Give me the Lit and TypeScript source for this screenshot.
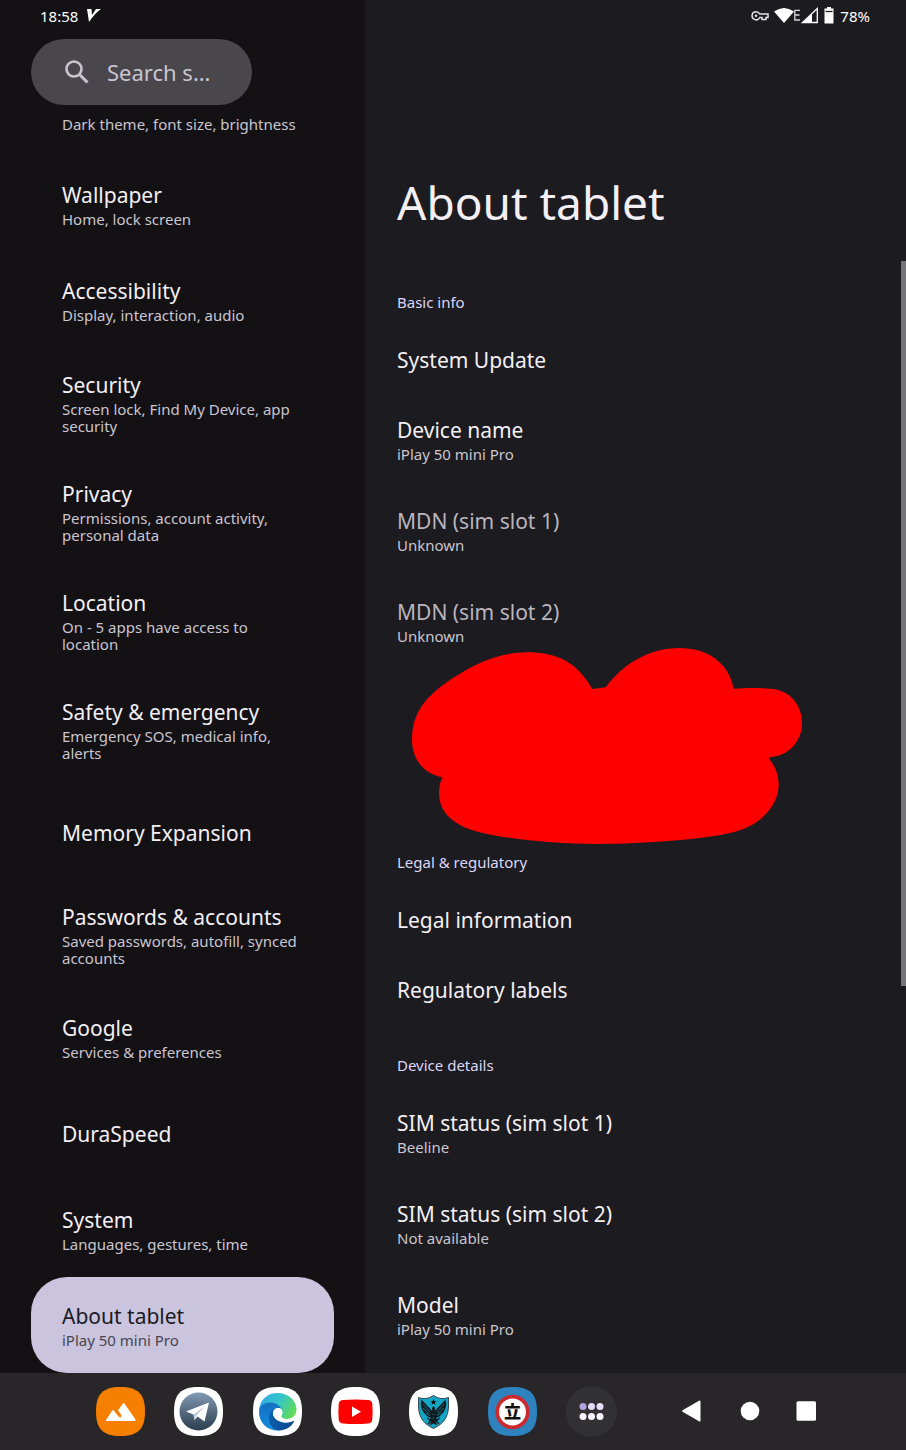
import { LitElement, html, css, svg, nothing } from "lit";
import { customElement } from "lit/decorators.js";
import { classMap } from "lit/directives/class-map.js";

interface Entry {
  title: string;
  sub?: string;
  selected?: boolean;
  disabled?: boolean;
}

const MENU: Entry[] = [
  { title: "Wallpaper", sub: "Home, lock screen" },
  { title: "Accessibility", sub: "Display, interaction, audio" },
  { title: "Security", sub: "Screen lock, Find My Device, app security" },
  { title: "Privacy", sub: "Permissions, account activity, personal data" },
  { title: "Location", sub: "On - 5 apps have access to location" },
  { title: "Safety & emergency", sub: "Emergency SOS, medical info, alerts" },
  { title: "Memory Expansion" },
  { title: "Passwords & accounts", sub: "Saved passwords, autofill, synced accounts" },
  { title: "Google", sub: "Services & preferences" },
  { title: "DuraSpeed" },
  { title: "System", sub: "Languages, gestures, time" },
  { title: "About tablet", sub: "iPlay 50 mini Pro", selected: true },
];

const BASIC: Entry[] = [
  { title: "System Update" },
  { title: "Device name", sub: "iPlay 50 mini Pro" },
  { title: "MDN (sim slot 1)", sub: "Unknown", disabled: true },
  { title: "MDN (sim slot 2)", sub: "Unknown", disabled: true },
];

const LEGAL: Entry[] = [{ title: "Legal information" }, { title: "Regulatory labels" }];

const DETAILS: Entry[] = [
  { title: "SIM status (sim slot 1)", sub: "Beeline" },
  { title: "SIM status (sim slot 2)", sub: "Not available" },
  { title: "Model", sub: "iPlay 50 mini Pro" },
];

const SQUIRCLE = "M24.5 0C42 0 49 7 49 24.5S42 49 24.5 49 0 42 0 24.5 7 0 24.5 0Z";

const APPS = [
  {
    name: "Gallery",
    art: svg`<path d=${SQUIRCLE} fill="#f77f00"/>
      <path d="M10 33L16.300 23.500Q17 22.500 17.800 23.500L22.500 29.500Q24 31 25.300 29.700 26 29 25 27.500L22 23.300 27 16.500Q27.700 15.700 28.400 16.600L39.500 32.500Q40 34 38.500 34H10.500Q9.500 34 10 33Z" fill="#fff"/>`,
  },
  {
    name: "Telegram X",
    art: svg`<defs><linearGradient id="tg" x2="0" y2="1"><stop stop-color="#8299b3"/><stop offset="1" stop-color="#2b3d4e"/></linearGradient></defs>
      <path d=${SQUIRCLE} fill="#fff"/><circle cx="24.500" cy="24.500" r="19" fill="url(#tg)"/>
      <path d="M12 24.500L35 15.500 30.500 34.500 23.500 29.500 20.500 33 19.500 27.500Z" fill="#fff"/>
      <path d="M19.500 27.500L31 19 22 28.800 20.500 33Z" fill="#b9c7d6"/>`,
  },
  {
    name: "Edge",
    art: svg`<defs>
        <linearGradient id="eg1" x1="0" y1=".2" x2="1" y2=".6"><stop stop-color="#2fa9e2"/><stop offset=".5" stop-color="#34c5c9"/><stop offset="1" stop-color="#62db55"/></linearGradient>
        <linearGradient id="eg2" x2="0" y2="1"><stop stop-color="#1470c0"/><stop offset="1" stop-color="#148bde"/></linearGradient>
        <linearGradient id="eg3" x2="1" y2=".3"><stop stop-color="#0a61b0"/><stop offset="1" stop-color="#0c4a92"/></linearGradient>
      </defs>
      <path d=${SQUIRCLE} fill="#fff"/>
      <path d="M6 23C7 12 15 6 24.500 6 36 6 43.500 14 43.500 22.500 43.500 29 38.500 32 34 32 29 32 27.500 30 28.500 28.500 30.500 26 29 21 24 20 18 15 9 18 6 23Z" fill="url(#eg1)"/>
      <path d="M6 25C6 19 11 15.500 16.500 15.500 23 15.500 27 18.500 28.500 22 24 19.500 20 22 20 27.500 20 36 27 40 32 41.500 29 43.300 26 43.500 24.500 43.500 14 43.500 6 35.500 6 25Z" fill="url(#eg2)"/>
      <path d="M20.300 22.500C14 27 14.500 40 24.500 43.300 33 44 39 39 41 34.500 41.300 33.700 40.700 33.400 40 33.900 31 38.500 20.500 33 20 26.500 19.900 25 20 23.500 20.300 22.500Z" fill="url(#eg3)"/>
      <path d="M20 27C19.500 22 25.500 19 28.500 22.500 30 25 29.500 27 28.500 28.500 27.500 30 29 32 34 32 37 32 39.500 31 41 29.500V33.300C33 38 21 34.500 20 27Z" fill="#fff"/>`,
  },
  {
    name: "YouTube",
    art: svg`<path d=${SQUIRCLE} fill="#fff"/>
      <path d="M12 13Q24.500 12 37 13 41 13.300 41.300 17 42 25 41.300 32.500 41 36.200 37 36.500 24.500 37.500 12 36.500 8 36.200 7.700 32.500 7 25 7.700 17 8 13.300 12 13Z" fill="#f00"/>
      <path d="M21 19.500V30L30 24.700Z" fill="#fff"/>`,
  },
  {
    name: "Shield",
    art: svg`<path d=${SQUIRCLE} fill="#fff"/>
      <path d="M24.500 8.500Q17 13.500 9.500 10.500V20C10 31 15 37 24.500 41.500 34 37 39 31 39.500 20V10.500Q32 13.500 24.500 8.500Z" fill="#12a5c4" stroke="#222a30" stroke-width=".8"/>
      <path d="M24.500 12L25.300 14.100 27.500 14.200 25.800 15.600 26.400 17.800 24.500 16.500 22.600 17.800 23.200 15.600 21.500 14.200 23.700 14.100Z" fill="#111"/>
      <g fill="#101b20">
        <path d="M24.500 19L26 21 25.800 24Q30.500 19 36.500 12.500 38 17 36.500 21 35.500 25 32 28 30.500 30 27 31L29.500 34 27 34 28 38.500 24.500 36.500 21 38.500 22 34 19.500 34 22 31Q18.500 30 17 28 13.500 25 12.500 21 11 17 12.500 12.500 18.500 19 23.200 24L23 21Z"/>
        <path d="M18 31L22 33.500 19 37M31 31L27 33.500 30 37" fill="none" stroke="#101b20" stroke-width="1.200"/>
      </g>
      <path d="M14 17L21 25M14 21L20.500 27M16.500 26L21 28.500M35 17L28 25M35 21L28.500 27M32.500 26L28 28.500M23.500 27.500H25.500M23.500 31H25.500" stroke="#12a5c4" stroke-width=".6" fill="none"/>`,
  },
  {
    name: "Stand",
    art: svg`<path d=${SQUIRCLE} fill="#2e83bf"/>
      <circle cx="24.500" cy="25" r="15.300" fill="#fff" stroke="#cb2b30" stroke-width="3.700"/>
      <text x="24.500" y="31" text-anchor="middle" font-family="'Noto Sans CJK JP', sans-serif" font-size="17" font-weight="900" fill="#111">立</text>`,
  },
];

@customElement("app-root")
export class AppRoot extends LitElement {
  static styles = css`
    :host {
      display: flex;
      flex-direction: column;
      min-height: 100vh;
      background: #1c1b1f;
      color: #f3eff5;
      font-family: "Noto Sans", "Open Sans", sans-serif;
      font-size: 15px;
      line-height: 17px;
    }
    * {
      box-sizing: border-box;
    }
    a {
      color: inherit;
      text-decoration: none;
    }
    button {
      border: 0;
      padding: 0;
      background: none;
      color: inherit;
      font: inherit;
    }
    svg {
      display: block;
    }
    h1,
    h2,
    ul {
      margin: 0;
      padding: 0;
      list-style: none;
      font-weight: 400;
    }
    .panes {
      display: grid;
      grid-template-columns: 365px minmax(0, 1fr);
      flex: 1;
    }
    .side {
      background: #131114;
      padding: 0 31px;
    }
    .main {
      position: relative;
      padding: 0 32px;
    }
    .status {
      display: flex;
      align-items: center;
      height: 32px;
      color: #fff;
    }
    .side .status {
      gap: 9px;
      padding-left: 9px;
    }
    .main .status {
      justify-content: flex-end;
      padding-right: 4px;
    }
    .status .level {
      margin-left: 5px;
    }
    .search {
      display: flex;
      align-items: center;
      gap: 16px;
      width: 221px;
      height: 66px;
      margin-top: 7px;
      padding: 0 24px 0 32px;
      border-radius: 33px;
      background: #49474b;
      color: #cac5d0;
    }
    .search svg {
      flex: none;
    }
    .search input {
      flex: 1;
      min-width: 0;
      padding: 0;
      border: 0;
      outline: 0;
      background: none;
      color: inherit;
      font: inherit;
      font-size: 22px;
      line-height: 26px;
    }
    .search input::placeholder {
      color: inherit;
      opacity: 1;
    }
    .above {
      display: block;
      height: 51px;
      padding: 11px 31px 0;
      color: #cac5d0;
      white-space: nowrap;
    }
    .row {
      display: flex;
      flex-direction: column;
      gap: 3px;
    }
    .title {
      font-size: 21px;
      line-height: 26px;
    }
    .sub {
      color: #cac5d0;
    }
    .side .row {
      justify-content: center;
      min-height: 96px;
      padding: 24px 31px 22px;
    }
    .side .row.selected {
      border-radius: 36px;
      background: #cac4de;
      color: #1c1b1f;
    }
    .selected .sub {
      color: #49454f;
    }
    .main .row {
      padding: 22px 0;
    }
    .main .row.double {
      padding-bottom: 23px;
    }
    .disabled .title {
      color: #b9b5be;
    }
    h1 {
      padding: 140px 0 49px;
      font-size: 46px;
      line-height: 60px;
    }
    h2 {
      display: flex;
      align-items: center;
      height: 44px;
      padding-bottom: 2px;
      color: #dcd6f7;
      font-size: 15px;
    }
    .section + .section {
      padding-top: 19px;
    }
    .private {
      position: relative;
      height: 154px;
    }
    .scribble {
      position: absolute;
      left: 15px;
      top: -20px;
      width: 390px;
      height: 196px;
    }
    .thumb {
      position: absolute;
      right: 0;
      top: 261px;
      width: 5px;
      height: 50%;
      min-height: 725px;
      background: #757478;
    }
    .dock {
      display: flex;
      align-items: center;
      justify-content: space-between;
      height: 77px;
      padding: 0 88px 1px 96px;
      background: #282629;
    }
    .apps {
      display: flex;
      align-items: center;
      justify-content: space-between;
      width: 521px;
    }
    .keys {
      display: flex;
      align-items: center;
      gap: 32px;
    }
  `;

  private row(e: Entry) {
    return html`<li>
      <a
        href="#"
        class=${classMap({ row: true, double: !!e.sub, selected: !!e.selected, disabled: !!e.disabled })}
        aria-current=${e.selected ? "page" : nothing}
        aria-disabled=${e.disabled ? "true" : nothing}
      >
        <span class="title">${e.title}</span>
        ${e.sub ? html`<span class="sub">${e.sub}</span>` : nothing}
      </a>
    </li>`;
  }

  private section(name: string, rows: Entry[], extra: unknown = nothing) {
    return html`<section class="section">
      <h2>${name}</h2>
      <ul>
        ${rows.map((r) => this.row(r))}
      </ul>
      ${extra}
    </section>`;
  }

  render() {
    return html`
      <div class="panes">
        <nav class="side" aria-label="Settings">
          <div class="status">
            <span>18:58</span>
            <svg width="14" height="14" viewBox="0 0 14 14" aria-hidden="true">
              <path d="M0 0H4.500L5 6 9 0H14Q8 4 2 13Z" fill="#fff" />
            </svg>
          </div>
          <label class="search">
            <svg width="28" height="28" viewBox="0 0 28 28" aria-label="Search">
              <circle cx="11" cy="11" r="7.500" fill="none" stroke="#cac5d0" stroke-width="2.600" />
              <path d="M16.500 16.500L24.500 24.500" stroke="#cac5d0" stroke-width="3" />
            </svg>
            <input type="text" placeholder="Search s…" aria-label="Search settings" />
          </label>
          <a href="#" class="above">Dark theme, font size, brightness</a>
          <ul>
            ${MENU.map((r) => this.row(r))}
          </ul>
        </nav>
        <main class="main">
          <div class="status">
            <svg width="67" height="18" viewBox="0 0 67 18" aria-hidden="true">
              <path d="M5 4.800A4 4 0 1 0 8.700 10.500H11V12.500H15V10.500H17V7H8.700A4 4 0 0 0 5 4.800Z" fill="none" stroke="#e4e2e6" stroke-width="1.500" />
              <circle cx="5" cy="8.800" r="1.300" fill="#e4e2e6" />
              <path d="M23 4.500Q33 -2.500 43 4.500L33 16Z" fill="#fff" />
              <path d="M49 3.300H43.800V13H49M43.800 8H48.500" fill="none" stroke="#d8d6da" stroke-width="1.300" />
              <path d="M66.300 1.500V15.500H51.500Z" fill="none" stroke="#fff" stroke-width="1.300" />
              <path d="M61 7V16H51Z" fill="#fff" />
            </svg>
            <svg class="level" width="12" height="18" viewBox="0 0 12 18" aria-hidden="true">
              <path d="M4 0H8V1.500H10.500V16.500H1.500V1.500H4Z" fill="#fff" />
              <path d="M2.500 4.500H9.500" stroke="#1c1b1f" stroke-width="1.300" />
            </svg>
            <span class="level">78%</span>
          </div>
          <h1>About tablet</h1>
          ${this.section(
            "Basic info",
            BASIC,
            html`<div class="private">
              <svg class="scribble" viewBox="66 174 1170 588" aria-hidden="true">
                <path
                  fill="#f00"
                  d="M607 297L647 292C700 220 780 174 868 174C950 174 1015 215 1031 296C1070 293 1110 294 1140 296C1200 299 1236 345 1236 398C1236 455 1195 498 1141 501L1138 508C1158 530 1166 560 1166 585C1166 640 1120 700 1040 724C960 748 760 762 620 762C480 762 300 742 235 716C180 695 147 660 147 608C147 590 151 575 157 562C105 553 66 510 66 450C66 370 105 325 160 284C230 235 310 188 410 187C500 187 560 215 607 297Z"
                />
              </svg>
            </div>`
          )}
          ${this.section("Legal & regulatory", LEGAL)} ${this.section("Device details", DETAILS)}
          <div class="thumb"></div>
        </main>
      </div>
      <footer class="dock">
        <div class="apps">
          ${APPS.map(
            (a) => html`<button aria-label=${a.name}>
              <svg width="49" height="49" viewBox="0 0 49 49">${a.art}</svg>
            </button>`
          )}
          <button aria-label="All apps">
            <svg width="51" height="51" viewBox="0 0 51 51">
              <circle cx="25.500" cy="25.500" r="25.500" fill="#313033" />
              <circle cx="17" cy="20.500" r="3.500" fill="#b0a3e4" />
              <circle cx="25.500" cy="20.500" r="3.500" fill="#e2dafb" />
              <circle cx="34" cy="20.500" r="3.500" fill="#e6dffc" />
              <circle cx="17" cy="30.500" r="3.500" fill="#f7f3ff" />
              <circle cx="25.500" cy="30.500" r="3.500" fill="#f7f3ff" />
              <circle cx="34" cy="30.500" r="3.500" fill="#f7f3ff" />
            </svg>
          </button>
        </div>
        <div class="keys">
          <button aria-label="Back">
            <svg width="25" height="24" viewBox="0 0 25 24"><path d="M1.500 11.200L18 1.800Q19.500 1.200 19.500 2.500V21.500Q19.500 22.800 18 22.200L1.500 12.800Q.5 12 1.500 11.200Z" fill="#fff" /></svg>
          </button>
          <button aria-label="Home">
            <svg width="24" height="24" viewBox="0 0 24 24"><circle cx="12" cy="12" r="9.300" fill="#fff" /></svg>
          </button>
          <button aria-label="Recents">
            <svg width="24" height="24" viewBox="0 0 24 24"><rect x="2.500" y="2.300" width="19.500" height="19.500" rx="1.500" fill="#fff" /></svg>
          </button>
        </div>
      </footer>
    `;
  }
}
